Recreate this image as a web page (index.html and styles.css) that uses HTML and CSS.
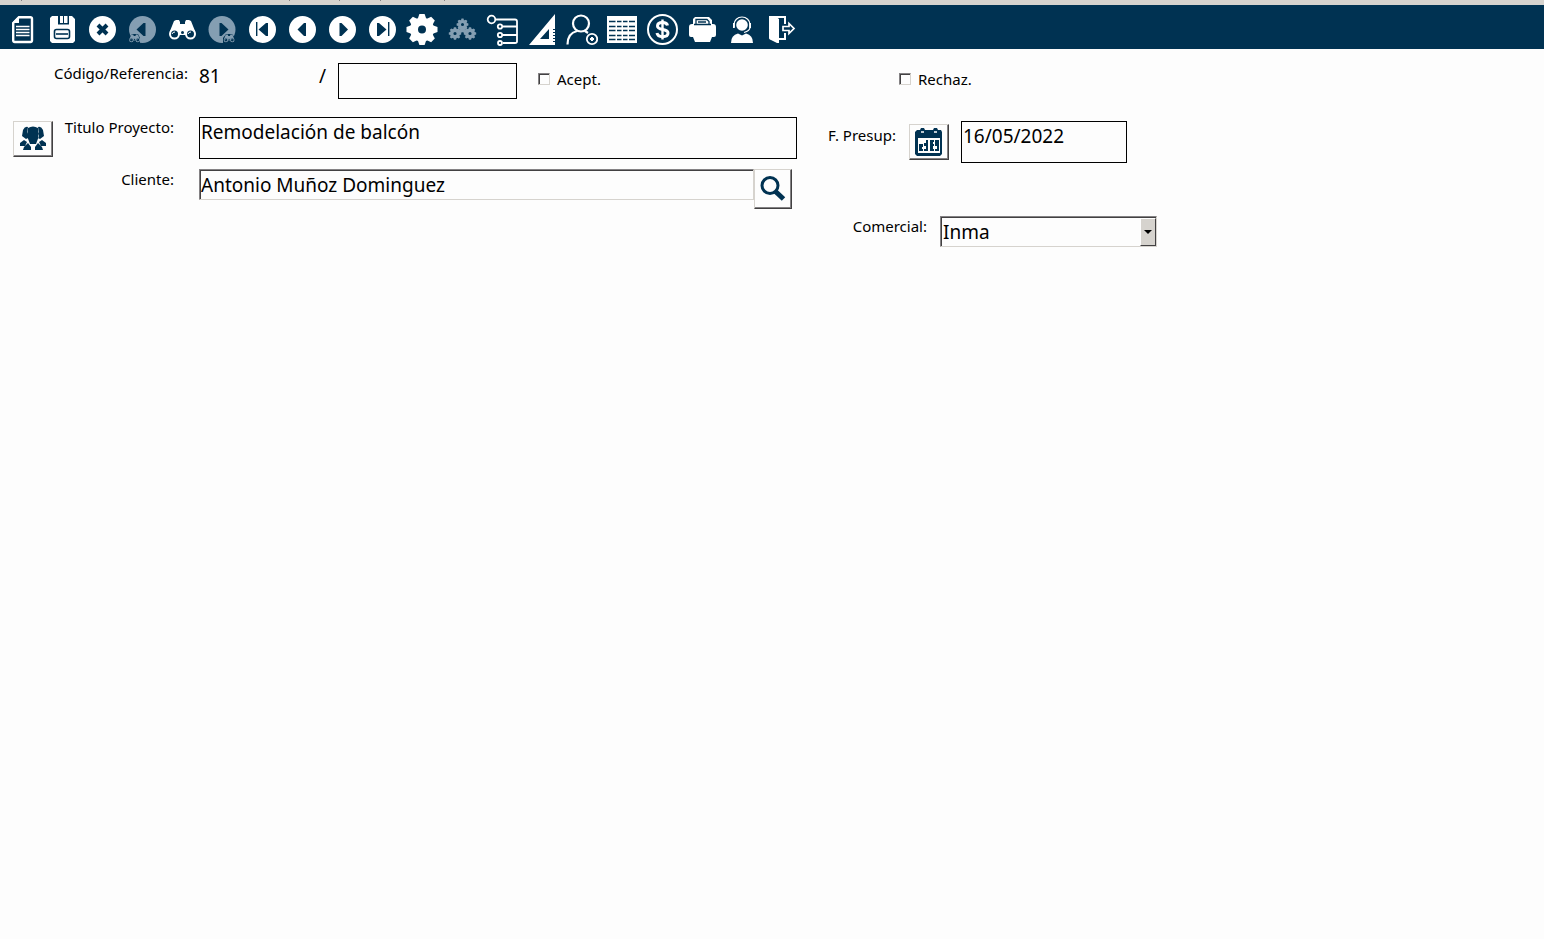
FILE: index.html
```html
<!DOCTYPE html>
<html lang="es">
<head>
<meta charset="utf-8">
<title>Proyecto 81</title>
<link rel="stylesheet" href="styles.css">
</head>
<body>
<svg class="defs" aria-hidden="true">
  <defs>
    <g id="gear">
      <g fill="none" stroke="currentColor" stroke-width="8"><circle r="8"/></g>
      <g fill="currentColor">
        <path id="tooth" d="M-4.500-10-2.600-15.500H2.600L4.500-10Z"/>
        <use href="#tooth" transform="rotate(45)"/><use href="#tooth" transform="rotate(90)"/>
        <use href="#tooth" transform="rotate(135)"/><use href="#tooth" transform="rotate(180)"/>
        <use href="#tooth" transform="rotate(225)"/><use href="#tooth" transform="rotate(270)"/>
        <use href="#tooth" transform="rotate(315)"/>
      </g>
    </g>
    <g id="binoculars">
      <path fill="currentColor" d="M8 7l2-1h3l1 2v2h5V8l1-2h3l2 1 4 10H4Z"/>
      <circle cx="8.500" cy="20" r="5.500" fill="currentColor"/>
      <circle cx="24.500" cy="20" r="5.500" fill="currentColor"/>
      <path fill="currentColor" d="M13 14h7v7h-7z"/>
      <g fill="#003252"><circle cx="8.500" cy="20" r="3.500"/><circle cx="24.500" cy="20" r="3.500"/><circle cx="16.500" cy="18.500" r="1.500"/><path d="M14 23h5v3h-5z"/></g>
      <g fill="none" stroke="currentColor"><path d="M6 20a3 3 0 0 1 3-2M22 20a3 3 0 0 1 3-2"/></g>
    </g>
  </defs>
</svg>
<div class="ruler" aria-hidden="true"><svg class="ruler-marks" width="500" height="1"><path fill="#848284" d="M21 0h1v1h-1zM289 0h1v1h-1zM339 0h1v1h-1zM380 0h1v1h-1zM444 0h1v1h-1z"/></svg></div>
<nav class="toolbar" aria-label="Acciones">
  <button class="tool" type="button" aria-label="Nuevo"><svg viewBox="0 0 32 32"><path fill="none" stroke="#fff" stroke-width="2.400" stroke-linejoin="round" d="M13 3.200H24.500a1.500 1.500 0 0 1 1.500 1.500V26.500a1.500 1.500 0 0 1-1.500 1.500H8.700a1.500 1.500 0 0 1-1.500-1.500V9Z"/><path fill="#fff" d="M6 9 13 2v7Z"/><path stroke="#fff" stroke-width="1.400" d="M10 12.500h13.500M10 15.500h13.500M10 18.500h13.500M10 21.500h13.500"/></svg></button>
  <button class="tool" type="button" aria-label="Guardar"><svg viewBox="0 0 32 32"><path fill="#fff" d="M6 2h6v8.500h11V2h3l3 3v22l-2 2H6l-2-2V4ZM14 2h3v7h-3ZM18 2h3.500v7H18Z"/><rect x="8.500" y="15.500" width="15" height="9" rx="2" fill="#fff" stroke="#003252" stroke-width="1.600"/><path stroke="#003252" stroke-width="1.600" d="M10 20h12"/></svg></button>
  <button class="tool" type="button" aria-label="Cancelar"><svg viewBox="0 0 32 32"><circle cx="16.500" cy="15.500" r="13.500" fill="#fff"/><path stroke="#003252" stroke-width="4" d="M12 11l9 9M21 11l-9 9"/></svg></button>
  <button class="tool muted" type="button" disabled aria-label="Buscar anterior"><svg viewBox="0 0 32 32"><circle cx="16.500" cy="15.500" r="13.500" fill="currentColor"/><path fill="#003252" d="M10.500 15.500 17.500 9h2v13h-2ZM3 24l3-4h6l2 4v5H3z"/><use href="#binoculars" transform="translate(2 18) scale(.4)"/></svg></button>
  <button class="tool" type="button" aria-label="Buscar"><svg viewBox="0 0 32 32"><use href="#binoculars"/></svg></button>
  <button class="tool muted" type="button" disabled aria-label="Buscar siguiente"><svg viewBox="0 0 32 32"><circle cx="16" cy="15.500" r="13.500" fill="currentColor"/><path fill="#003252" d="M22.500 15.500 15.500 9h-2v13h2ZM17 24l3-4h6l3 4v5H17z"/><use href="#binoculars" transform="translate(16.500 18) scale(.4)"/></svg></button>
  <button class="tool" type="button" aria-label="Primero"><svg viewBox="0 0 32 32"><circle cx="16.500" cy="15.500" r="13.500" fill="#fff"/><path fill="#003252" d="M10 8h1.400v14H10ZM12.500 15.500 20 9h2v13h-2Z"/></svg></button>
  <button class="tool" type="button" aria-label="Anterior"><svg viewBox="0 0 32 32"><circle cx="16.500" cy="15.500" r="13.500" fill="#fff"/><path fill="#003252" d="M11.500 15.500 18 9h2v13h-2Z"/></svg></button>
  <button class="tool" type="button" aria-label="Siguiente"><svg viewBox="0 0 32 32"><circle cx="16.500" cy="15.500" r="13.500" fill="#fff"/><path fill="#003252" d="M22 15.500 15.500 9h-2v13h2Z"/></svg></button>
  <button class="tool" type="button" aria-label="Último"><svg viewBox="0 0 32 32"><circle cx="16.500" cy="15.500" r="13.500" fill="#fff"/><path fill="#003252" d="M22 8h1.400v14H22ZM20.500 15.500 13 9h-2v13h2Z"/></svg></button>
  <button class="tool" type="button" aria-label="Configuración"><svg viewBox="0 0 32 32"><use href="#gear" transform="translate(16 15.500)"/></svg></button>
  <button class="tool muted" type="button" disabled aria-label="Procesos"><svg viewBox="0 0 32 32"><use href="#gear" transform="translate(16.500 10.500) scale(.38)"/><use href="#gear" transform="translate(9 19.500) scale(.4)"/><use href="#gear" transform="translate(24 19.500) scale(.4)"/><path fill="none" stroke="currentColor" stroke-width="2.400" d="M13 13l7 6M20 13l-7 6M11 17h11"/></svg></button>
  <button class="tool" type="button" aria-label="Estructura"><svg viewBox="0 0 32 32"><g fill="none" stroke="#fff" stroke-width="1.800"><circle cx="5.500" cy="5.500" r="3.800"/><path d="M9.500 5.500H29q2 0 2 2V27.500q0 1.500-2 1.500H17M17 12.500h14M17 21h14"/><circle cx="14" cy="12.500" r="2.200"/><circle cx="14" cy="21" r="2.200"/><circle cx="14" cy="29" r="2"/></g></svg></button>
  <button class="tool" type="button" aria-label="Medidas"><svg viewBox="0 0 32 32"><path fill="#fff" fill-rule="evenodd" d="M29 0V31H3ZM23 15v10h-9Z"/><path stroke="#003252" d="M27 15.500h2M27 18.500h2M27 21.500h2M27 24.500h2M27 27.500h2"/></svg></button>
  <button class="tool" type="button" aria-label="Añadir contacto"><svg viewBox="0 0 32 32"><g fill="none" stroke="#fff" stroke-width="2.200"><circle cx="15" cy="9.500" r="8"/><path d="M1.500 30.500C1.500 23 5 18.500 11 17M19 17l3 2"/><circle cx="26" cy="25" r="5.200" stroke-width="1.800"/></g><path stroke="#fff" stroke-width="2" d="M24 25h4M26 23v4"/></svg></button>
  <button class="tool" type="button" aria-label="Tabla"><svg viewBox="0 0 32 32"><path fill="#fff" d="M1 2h30v27H1z"/><path stroke="#003252" stroke-width="1.400" d="M3 7.500h6.500M11 7.500h4.500M17 7.500h4.500M23 7.500h6M3 12.500h6.500M11 12.500h4.500M17 12.500h4.500M23 12.500h6M3 16.500h6.500M11 16.500h4.500M17 16.500h4.500M23 16.500h6M3 21.500h6.500M11 21.500h4.500M17 21.500h4.500M23 21.500h6M3 25.500h6.500M11 25.500h4.500M17 25.500h4.500M23 25.500h6"/></svg></button>
  <button class="tool" type="button" aria-label="Importes"><svg viewBox="0 0 32 32"><g fill="none" stroke="#fff"><circle cx="16.500" cy="15.500" r="14.500" stroke-width="2"/><path stroke-width="3" d="M21.500 11.500C21 9 19 8.500 16.500 8.500c-3 0-5 1.200-5 3.500 0 5 10.500 2 10.500 7 0 2.500-2 3.700-5.500 3.700-3 0-5-1-5.500-3.700"/><path stroke-width="2.400" d="M16.500 5.500v20"/></g></svg></button>
  <button class="tool" type="button" aria-label="Imprimir"><svg viewBox="0 0 32 32"><path fill="#fff" d="M9 3h14l3 3v4h1q3 0 3 3v8q0 2-2 2h-2l-2 5H9l-2-5H5q-2 0-2-2v-8q0-3 3-3h1V5Z"/><path fill="none" stroke="#003252" stroke-width="1.300" d="M10 10.500V5.500h11l2 2v3M12 8h8M8 10.500h17"/></svg></button>
  <button class="tool" type="button" aria-label="Soporte"><svg viewBox="0 0 32 32"><circle cx="16" cy="11" r="5.800" fill="#fff"/><path fill="none" stroke="#fff" stroke-width="1.200" d="M8 13V10.500a8 7.500 0 0 1 16 0V13M24 13q0 4-6 5.500"/><path fill="#fff" d="M7 9h1.800v5H7zM23.200 9H25v5h-1.800zM5 29q0-8 7-9.500l4 2 4-2q7 1.500 7 9.500Z"/></svg></button>
  <button class="tool" type="button" aria-label="Salir"><svg viewBox="0 0 32 32"><path fill="#fff" d="M3 2h6l4 3v24h-2l-7-3.500q-1-.5-1-1.500Z"/><path fill="none" stroke="#fff" stroke-width="2" d="M6 3h13v7M19 19v6h-6"/><path fill="none" stroke="#fff" stroke-width="1.700" d="M17 12.500h6V9.500l5 5-5 5v-3h-6Z"/></svg></button>
</nav>
<form class="form">
  <section class="pane main-pane">
    <div class="row">
      <label class="caption" for="ref">Código/Referencia:</label>
      <div class="reference">
        <output class="code">81</output><span class="slash">/</span>
        <input class="field ref-field" id="ref" type="text">
        <label class="check"><input type="checkbox">Acept.</label>
      </div>
    </div>
    <div class="row title-row">
      <div class="caption-group">
        <button class="icon-button" type="button" aria-label="Participantes"><svg width="28" height="28" viewBox="0 0 28 28"><g fill="#003252"><path d="M9 3q5-3 10 0l1 8-3 8h-6L8 11ZM4 5q2-4 5-3L8 7l1 6-2 1-4-3ZM24 5q-2-4-5-3l1 5-1 6 2 1 4-3Z"/><path d="M5 15l3 2-2 4H1v-3ZM23 15l-3 2 2 4h5v-3ZM9 18l3 4v3H4l1-3ZM19 18l-3 4v3h8l-1-3Z"/></g></svg></button>
        <label class="caption inset" for="titulo">Titulo Proyecto:</label>
      </div>
      <input class="field tall" id="titulo" type="text" value="Remodelación de balcón">
    </div>
    <div class="row">
      <label class="caption inset" for="cliente">Cliente:</label>
      <div class="lookup">
        <input class="sunken" id="cliente" type="text" value="Antonio Muñoz Dominguez">
        <button class="icon-button search" type="button" aria-label="Buscar cliente"><svg width="28" height="28" viewBox="0 0 28 28"><circle cx="11" cy="10.500" r="8" fill="none" stroke="#003252" stroke-width="3"/><path stroke="#003252" stroke-width="5" d="M16.500 16.500l8 7.500"/></svg></button>
      </div>
    </div>
  </section>
  <section class="pane side-pane">
    <label class="check rejected"><input type="checkbox">Rechaz.</label>
    <div class="date-row">
      <label class="caption date-caption" for="fecha">F. Presup:</label>
      <button class="icon-button" type="button" aria-label="Elegir fecha"><svg width="28" height="30" viewBox="0 0 28 30"><path fill="#003252" d="M2 3h3l1-2h3l1 2h8l1-2h3l1 2h3l1 2v22l-2 2H2l-2-2V5Z"/><path fill="#fdfdfd" d="M3 11h22v15H3Z"/><path stroke="#fdfdfd" stroke-width="1.300" d="M6 5h3M19 5h3"/><path fill="#003252" d="M4 17h4v3H7v2h1v2H4zM9 16h2v-3h2v11H9v-2h2v-3H9zM15 13h4v2h-1v2h1v2h-1v3h1v2h-4zM20 13h4v11h-4v-2h2v-3h-2z"/></svg></button>
      <input class="field tall date-field" id="fecha" type="text" value="16/05/2022">
    </div>
    <div class="agent-row">
      <label class="caption" for="comercial">Comercial:</label>
      <div class="select-box">
        <select id="comercial"><option>Inma</option></select>
        <span class="select-arrow" aria-hidden="true"><svg width="8" height="4" viewBox="0 0 8 4"><path d="M0 0h8L4 4Z"/></svg></span>
      </div>
    </div>
  </section>
</form>
</body>
</html>
```
FILE: styles.css
```css
* { box-sizing: border-box; }

body {
  margin: 0;
  background: #fdfdfd;
  color: #000;
  font: 16px/20px "Noto Sans", sans-serif;
}

button, input, select { font: inherit; color: inherit; margin: 0; border-radius: 0; }

.defs { position: absolute; width: 0; height: 0; }

.ruler { height: 5px; background: #d6d3ce; }
.ruler-marks { display: block; }

.toolbar {
  display: flex;
  height: 44px;
  padding: 0 2px;
  background: #003252;
}

.tool {
  display: flex;
  align-items: center;
  justify-content: center;
  width: 40px;
  padding: 6px 0 0;
  border: 0;
  background: none;
  color: #fff;
}
.tool.muted { color: #849eb2; }
.tool svg { width: 32px; height: 32px; }

.form { display: flex; gap: 28px; padding-top: 14px; }
.pane { display: flex; flex-direction: column; }
.main-pane { flex: 0 1 797px; }
.side-pane { flex: 0 1 332px; padding-top: 6px; }

.row {
  display: grid;
  grid-template-columns: 188px minmax(0, 1fr);
  column-gap: 11px;
}
.title-row { margin: 18px 0 10px; }

.caption { text-align: right; white-space: nowrap; font-size: 15px; }
.inset { padding-right: 14px; }
.caption-group { display: flex; justify-content: space-between; padding-left: 13px; }
.caption-group .icon-button { margin-top: 4px; }

.field, .sunken {
  min-width: 0;
  width: 100%;
  padding: 0 1px;
  background: #fdfdfd;
  font-size: 19px;
}
.field { height: 36px; border: 1px solid #000; }
.field.tall { height: 42px; padding-bottom: 12px; }

.reference { display: flex; }
.code { width: 120px; font-size: 19px; line-height: 26px; }
.slash { width: 19px; font-size: 19px; line-height: 26px; }
.ref-field { width: 179px; }

.check { display: flex; align-items: center; gap: 7px; font-size: 15px; }
.reference .check { align-self: flex-start; margin-left: 21px; padding-top: 6px; }
.rejected { margin-left: 74px; }

.check input {
  appearance: none;
  width: 12px;
  height: 12px;
  background: #fdfdfd;
  border: 1px solid;
  border-color: #848284 #d6d3ce #d6d3ce #848284;
  box-shadow: inset 1px 1px #424142;
}

.icon-button {
  display: flex;
  flex: none;
  align-items: center;
  justify-content: center;
  width: 40px;
  height: 36px;
  padding: 0;
  background: #fdfdfd;
  border: 1px solid;
  border-color: #d6d3ce #424142 #424142 #d6d3ce;
  box-shadow: inset -1px -1px #848284;
}
.icon-button.search { width: 38px; height: 40px; }

.lookup { display: flex; padding-right: 5px; }
.sunken, .select-box {
  height: 31px;
  border: 1px solid;
  border-color: #848284 #d6d3ce #d6d3ce #848284;
  box-shadow: inset 1px 1px #424142;
}
.sunken { flex: 1; padding-left: 1px; }

.date-row { display: flex; margin: 32px 0 53px; }
.date-caption { width: 71px; padding-top: 4px; }
.date-row .icon-button { margin: 3px 12px 0 13px; }
.date-field { width: 166px; }

.agent-row { display: flex; justify-content: flex-end; gap: 13px; }
.select-box { display: flex; position: relative; width: 217px; }
.select-box select {
  appearance: none;
  width: 100%;
  padding: 0 20px 0 2px;
  border: 0;
  background: none;
  font-size: 19px;
}
.select-arrow {
  position: absolute;
  top: 1px;
  right: 0;
  bottom: 0;
  display: flex;
  align-items: center;
  justify-content: center;
  width: 16px;
  background: #d6d3ce;
  border: 1px solid;
  border-color: #fff #424142 #424142 #fff;
  pointer-events: none;
}
```
